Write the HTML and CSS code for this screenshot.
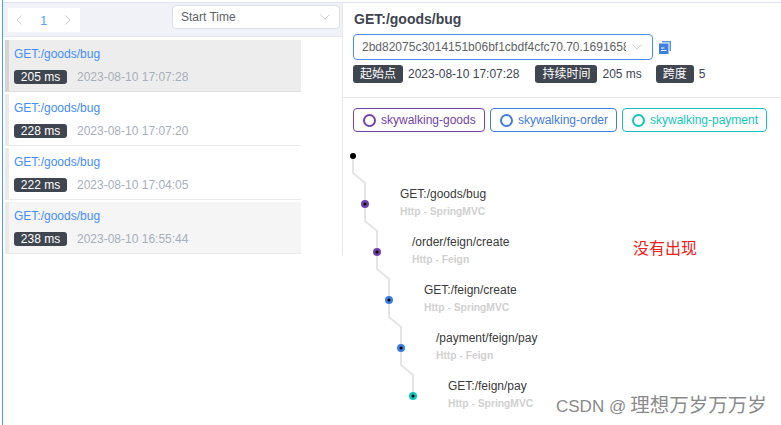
FILE: index.html
```html
<!DOCTYPE html>
<html lang="zh">
<head>
<meta charset="utf-8">
<title>Trace</title>
<link rel="stylesheet" href="styles.css">
</head>
<body>
<div class="page">
  <aside class="left">
    <div class="toolbar">
      <div class="pager">
        <svg class="chev" width="8" height="12" viewBox="0 0 8 12"><path d="M6.5 1.5 2 6l4.500 4.500" fill="none" stroke="#d0d3d9"/></svg>
        <span class="pagenum">1</span>
        <svg class="chev" width="8" height="12" viewBox="0 0 8 12"><path d="M1.500 1.500 6 6l-4.500 4.500" fill="none" stroke="#c4c7cd"/></svg>
      </div>
      <div class="sort">
        <span>Start Time</span>
        <svg width="10" height="6" viewBox="0 0 12 7"><path d="M.5.5 6 6 11.500.5" fill="none" stroke="#c0c4cc"/></svg>
      </div>
    </div>
    <ul class="list">
      <li class="item selected"><a>GET:/goods/bug</a><div class="meta"><b class="ms">205 ms</b><span>2023-08-10 17:07:28</span></div></li>
      <li class="item"><a>GET:/goods/bug</a><div class="meta"><b class="ms">228 ms</b><span>2023-08-10 17:07:20</span></div></li>
      <li class="item"><a>GET:/goods/bug</a><div class="meta"><b class="ms">222 ms</b><span>2023-08-10 17:04:05</span></div></li>
      <li class="item hover"><a>GET:/goods/bug</a><div class="meta"><b class="ms">238 ms</b><span>2023-08-10 16:55:44</span></div></li>
    </ul>
  </aside>
  <main class="right">
    <section class="head">
      <h1>GET:/goods/bug</h1>
      <div class="idrow">
        <div class="idselect">
          <span class="idtext">2bd82075c3014151b06bf1cbdf4cfc70.70.16916584</span>
          <svg width="10" height="6" viewBox="0 0 12 7"><path d="M.5.5 6 6 11.500.5" fill="none" stroke="#c0c4cc"/></svg>
        </div>
        <svg class="copy" width="13" height="14" viewBox="0 0 13 14"><path d="M3 2.500V1h9v10h-1.500V2.500z" fill="#5b95e8"/><path d="M0 3.500h9.500V14H0z" fill="#3f7fe0"/><path d="M2 8h3.500M2 10.500h5.500" stroke="#fff" fill="none"/></svg>
      </div>
      <div class="stats">
        <b class="label">起始点</b><span class="val v1">2023-08-10 17:07:28</span>
        <b class="label">持续时间</b><span class="val v2">205 ms</span>
        <b class="label">跨度</b><span class="val">5</span>
      </div>
    </section>
    <section class="services">
      <div class="svc goods"><i></i>skywalking-goods</div>
      <div class="svc order"><i></i>skywalking-order</div>
      <div class="svc payment"><i></i>skywalking-payment</div>
    </section>
  </main>
  <div class="tree">
    <svg class="links" width="80" height="260" viewBox="0 0 80 260">
      <path d="M1 5v17l12 10v38l12 10v38l12 10v38l12 10v38l12 10v21" fill="none" stroke="#e4e4e4" stroke-width="2"/>
      <circle cx="1" cy="5" r="3" fill="#000"/>
      <circle cx="13" cy="53" r="2.750" fill="#000" stroke="#6f3fa8" stroke-width="2.500"/>
      <circle cx="25" cy="101" r="2.750" fill="#000" stroke="#6f3fa8" stroke-width="2.500"/>
      <circle cx="37" cy="149" r="2.750" fill="#000" stroke="#3f7be0" stroke-width="2.500"/>
      <circle cx="49" cy="197" r="2.750" fill="#000" stroke="#3f7be0" stroke-width="2.500"/>
      <circle cx="61" cy="245" r="2.750" fill="#000" stroke="#14c4bc" stroke-width="2.500"/>
    </svg>
    <div class="node n1"><p>GET:/goods/bug</p><small>Http - SpringMVC</small></div>
    <div class="node n2"><p>/order/feign/create</p><small>Http - Feign</small></div>
    <div class="node n3"><p>GET:/feign/create</p><small>Http - SpringMVC</small></div>
    <div class="node n4"><p>/payment/feign/pay</p><small>Http - Feign</small></div>
    <div class="node n5"><p>GET:/feign/pay</p><small>Http - SpringMVC</small></div>
  </div>
  <div class="note">没有出现</div>
  <div class="mark">CSDN @<span class="cjk">理想万岁万万岁</span></div>
</div>
</body>
</html>
```
FILE: styles.css
```css
* { box-sizing: border-box; margin: 0; padding: 0; }
html, body { width: 781px; height: 425px; overflow: hidden; background: #fff; }
body { font-family: "Liberation Sans", "Noto Sans CJK SC", sans-serif; font-size: 12px; color: #3d444f; }

.page {
  position: relative;
  width: 779px;
  height: 425px;
  display: flex;
  align-items: flex-start;
  margin-left: 2px;
  padding-top: 3px;
  border-left: 1px solid #4a9bff;
  background: linear-gradient(#dfe3f0, #dfe3f0) 0 2px / 100% 1px no-repeat;
}

.left { width: 340px; height: 252px; flex: none; border-right: 1px solid #e8e8e8; }
.toolbar {
  height: 34px;
  padding: 2px 2px 0 5px;
  background: #f0f2f7;
  border-bottom: 1px solid #e6e8ef;
  display: flex;
  justify-content: space-between;
  align-items: flex-start;
}
.pager {
  width: 72px;
  height: 24px;
  margin-top: 3px;
  background: #fff;
  display: flex;
  align-items: center;
  justify-content: space-between;
  padding: 0 8px 0 7px;
}
.pagenum { color: #5aa3f5; font-size: 13px; }
.sort {
  width: 168px;
  height: 24px;
  background: #fff;
  border: 1px solid #dcdfe6;
  border-radius: 4px;
  display: flex;
  align-items: center;
  justify-content: space-between;
  padding: 0 9px 0 8px;
  color: #606266;
}

.list { list-style: none; width: 296px; margin: 3px 0 0 2px; }
.item {
  height: 52px;
  margin-bottom: 2px;
  padding: 7px 0 0 5px;
  border-left: 4px solid #eaeaea;
  border-bottom: 1px solid #eaeaea;
  background: #fff;
}
.item a { display: block; color: #448dfe; line-height: 15px; }
.item.selected { background: #ededed; border-left-color: #d4d4d4; border-bottom-color: #e0e0e0; }
.item.hover { background: #f5f5f5; }
.meta { display: flex; align-items: center; margin-top: 8px; color: #a7aebb; }
.ms {
  width: 53px;
  height: 14px;
  margin-right: 10px;
  border-radius: 3px;
  background: #40464f;
  color: #fff;
  font-weight: 400;
  line-height: 14px;
  text-align: center;
}

.right { width: 438px; flex: none; }
.head { height: 95px; padding: 8px 0 0 11px; border-bottom: 1px solid #e8e8e8; }
h1 { font-size: 14px; line-height: 16px; font-weight: 700; color: #3d444f; }
.idrow { display: flex; align-items: center; margin: 7px 0 0 -1px; gap: 6px; }
.idselect {
  width: 300px;
  height: 26px;
  border: 1px solid #448dfe;
  border-radius: 4px;
  display: flex;
  align-items: center;
  padding: 0 8px;
  color: #606266;
}
.idtext { width: 264px; overflow: hidden; white-space: nowrap; margin-right: 6px; }
.stats { display: flex; align-items: center; margin: 5px 0 0 -1px; height: 18px; }
.label {
  height: 18px;
  padding: 0 7px;
  border-radius: 3px;
  background: #40464f;
  color: #fff;
  font-weight: 400;
  line-height: 18px;
  margin-right: 5px;
}
.val { color: #3d444f; }
.v1 { margin-right: 16px; }
.v2 { margin-right: 14px; }

.services { display: flex; gap: 5px; padding: 10px 0 0 10px; }
.svc {
  height: 24px;
  display: flex;
  align-items: center;
  gap: 5px;
  padding: 0 0 0 9px;
  border: 1px solid currentColor;
  border-radius: 4px;
  white-space: nowrap;
}
.svc i { width: 13px; height: 13px; flex: none; border: 2px solid currentColor; border-radius: 50%; }
.goods { color: #7043ad; width: 132px; }
.order { color: #3f7be0; width: 127px; }
.payment { color: #14c4bc; width: 145px; }

.tree { position: absolute; left: 349px; top: 151px; width: 200px; height: 262px; }
.links { position: absolute; left: 0; top: 0; overflow: visible; }
.node { position: absolute; }
.node p { font-size: 12px; line-height: 15px; color: #3a3a3a; white-space: nowrap; }
.node small { display: block; margin-top: 3px; font-size: 10.300px; line-height: 14px; font-weight: 700; color: #d0d0d0; white-space: nowrap; }
.n1 { left: 48px; top: 36px; }
.n2 { left: 60px; top: 84px; }
.n3 { left: 72px; top: 132px; }
.n4 { left: 84px; top: 180px; }
.n5 { left: 96px; top: 228px; }

.note { position: absolute; left: 630px; top: 235px; font-size: 16px; color: #f02020; }
.mark { position: absolute; left: 553px; top: 389px; font-size: 17px; color: #8a8a8a; white-space: nowrap; }
.cjk { font-size: 19.500px; margin-left: 4px; }
```
